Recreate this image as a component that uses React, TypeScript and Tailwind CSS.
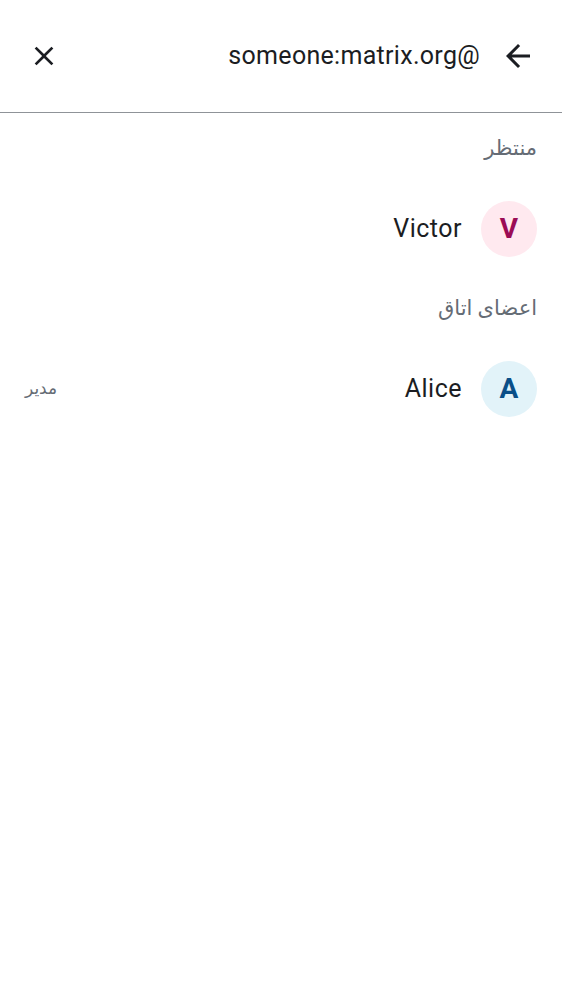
import React from 'react';

const members = {
  pending: [{ id: 'victor', name: 'Victor', initial: 'V', bg: 'bg-[#ffe9ef]', fg: 'text-[#9b0c55]', role: '' }],
  joined: [{ id: 'alice', name: 'Alice', initial: 'A', bg: 'bg-[#e2f3f9]', fg: 'text-[#0a4f88]', role: 'مدیر' }],
};

type Member = (typeof members.pending)[number];

const SectionLabel: React.FC<{ title: string }> = ({ title }) => (
  <div className="px-[25px] pt-[23px] pb-[13px] text-[21px] leading-6 text-[#656c75]">{title}</div>
);

const MemberRow: React.FC<{ member: Member }> = ({ member }) => (
  <div className="flex items-center px-[25px] pt-[28px] pb-[16px]">
    <div className={`flex h-14 w-14 shrink-0 items-center justify-center rounded-full ${member.bg}`}>
      <span className={`text-[28px] font-bold leading-none ${member.fg}`}>{member.initial}</span>
    </div>
    <span className="mr-[19px] text-[25px] leading-8 tracking-[0.5px] text-[#1b1d22]">{member.name}</span>
    <span className="mr-auto text-[17px] text-[#656c75]">{member.role}</span>
  </div>
);

export default function App() {
  return (
    <div dir="rtl" className="min-h-screen bg-white font-['Roboto','Noto_Sans','DejaVu_Sans',sans-serif]">
      <header className="flex h-[113px] items-center border-b border-[#8f9398] pr-[26px] pl-[28px]">
        <button className="flex h-9 w-9 items-center justify-center text-[#1b1d22]">
          <svg width="36" height="36" viewBox="0 0 24 24" fill="currentColor">
            <path d="M20 11H7.83l5.59-5.59L12 4l-8 8 8 8 1.41-1.41L7.83 13H20v-2z" />
          </svg>
        </button>
        <h1 className="mr-5 text-[25px] leading-8 tracking-[0.3px] text-[#1b1d22]">@someone:matrix.org</h1>
        <button className="mr-auto flex h-8 w-8 items-center justify-center text-[#1b1d22]">
          <svg width="32" height="32" viewBox="0 0 24 24" fill="currentColor">
            <path d="M19 6.41 17.59 5 12 10.59 6.41 5 5 6.41 10.59 12 5 17.59 6.41 19 12 13.41 17.59 19 19 17.59 13.41 12z" />
          </svg>
        </button>
      </header>

      <SectionLabel title="منتظر" />
      {members.pending.map((m) => (
        <MemberRow key={m.id} member={m} />
      ))}

      <SectionLabel title="اعضای اتاق" />
      {members.joined.map((m) => (
        <MemberRow key={m.id} member={m} />
      ))}
    </div>
  );
}
